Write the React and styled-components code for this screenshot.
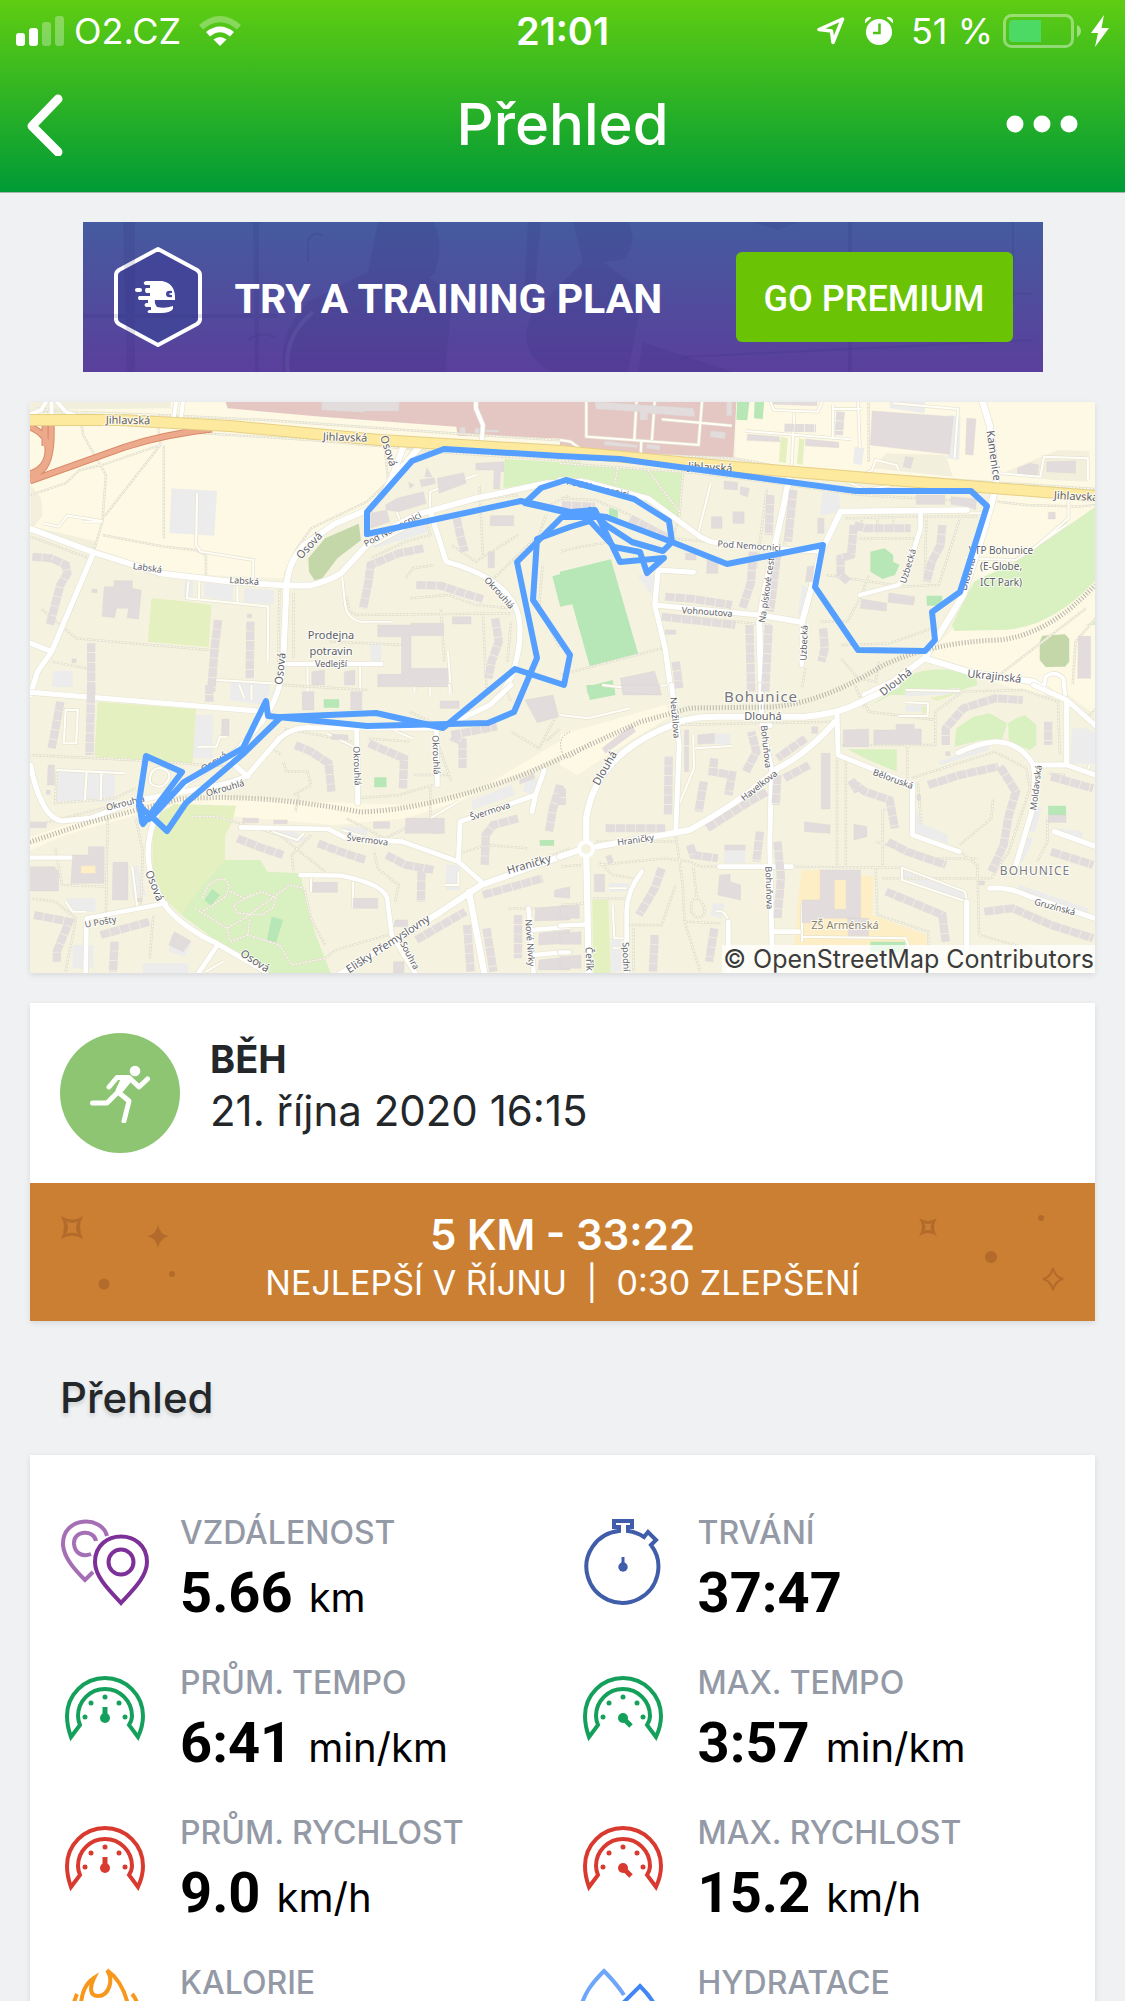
import React from 'react';
import styled, { createGlobalStyle } from 'styled-components';

const UI_FONT = 'Inter, "Liberation Sans", sans-serif';
const DISPLAY_FONT = 'Roboto, "Liberation Sans", sans-serif';

/* Map data. Each tile has its own grid, roughly three units to a pixel. */
const TILES = [
  {
    at: 'translate(-10 -7) scale(.3507 .3333)',
    areas: [
      ['#fdf9e5', 'M0 0H1600V150L1130 130 1040 300 960 350 830 420 780 480 750 550 540 540 400 530 210 470 0 395Z'],
      ['#f2f0dc', 'M30 20H430V40L30 45ZM30 270L60 310 65 360 40 395 220 440 210 465 30 400Z'],
      ['#e4c7c3', 'M580 0H1600V135L1520 130 1248 122 1244 95 860 65 592 40Z'],
      ['#ececec', 'M432 280L562 288 554 422 426 414ZM526 562L608 568 606 618 524 606ZM640 580L724 585 724 628 638 622ZM470 555L496 557 492 610 466 606ZM95 828H150V876H90ZM600 860H712V900H600ZM1000 420L1160 390 1165 410 1010 460ZM1000 740H1030V800H1000Z'],
      ['#e4f0bf', 'M375 610L460 618 546 630 538 756 364 740Z'],
      ['#d9f0c0', 'M1382 192L1600 205V262L1480 262 1378 280Z'],
      ['#c3d7a9', 'M966 386L972 436 905 490 862 550 840 556 824 530 822 490 870 430Z'],
      ['#b7e6b7', 'M1518 544L1600 520V620L1540 634Z'],
    ],
    paths: 'M30 50L400 60 700 75 1300 120 1600 140M170 50L180 120 245 240 235 380 210 470M45 40L140 50 390 60 400 150 235 210 170 225 130 265 30 300M400 150L240 365M410 150V430M235 420L410 455 500 465 530 480V540M450 110L830 135 1040 155 1240 175 1600 200M1040 155L1050 260 990 320 830 400 790 460 755 540M60 640L160 730 540 765M740 580L735 860M780 590V790M880 740L1100 750M30 425L200 490 150 640 90 770M90 800L190 820M1000 490L1100 440 1170 420 1160 380M1240 330L1340 310 1420 300M1310 270L1320 480M1230 450L1300 500 1420 420M1100 550L1120 520 1180 510M1110 610L1220 600 1300 630 1400 640M930 600L940 650 960 660 1400 655M1200 640L1210 800M1320 660L1330 880M1400 680L1390 800M1490 510L1480 640 1540 760M1350 550L1480 420 1500 360M1510 330L1568 300',
    lanes: 'M180 380L235 380M65 385L110 395 135 362 235 378M505 295L502 450 515 470 665 495V550M480 560L476 610 620 625 708 635 706 800M620 570V625M512 548L510 610M918 540L926 620Q930 670 970 680L1060 680M1168 350L1170 290 1300 240M1070 340L1085 380M1010 450L1100 400M820 810V890M970 810V900M1220 770L1230 900M560 855L735 866M1170 900V860',
    roads: [
      [17, 'M30 402L210 472 400 535 600 560 760 572 825 572Q880 558 915 535L990 450Q1100 365 1168 348L1300 310 1500 265 1600 258'],
      [17, 'M760 572L752 760Q752 850 725 910M760 572Q765 500 810 450L900 385 1000 340Q1050 290 1070 220L1095 150M1070 240L1140 155'],
      [15, 'M210 472L90 770 50 830 30 900M90 770L30 745'],
      [15, 'M1170 350L1215 500Q1420 560 1425 690 1430 760 1400 850L1370 900'],
      [14, 'M765 807H1030'],
      [11, 'M445 20L438 75M465 20L458 75M75 20L60 45 25 60M90 20V60M105 20L130 50 160 62M1300 20L1300 40 1320 90 1316 150'],
    ],
    rows: 'M35 485L90 490 130 510 135 535 115 570 100 630 85 690M203 745V900M565 675L555 760 545 890M657 680L655 850M1150 460L1080 475 1000 510 992 570 978 640M1130 570L1200 572 1250 590 1320 612M1245 370L1255 420 1268 470M1355 670L1365 740 1345 800 1335 850',
    buildings: 'M240 575H268V557H320V580L346 586 338 672 305 668 310 640H275L270 668 234 664ZM1300 205L1380 200V230H1370L1368 282H1350L1352 225H1300ZM1190 250L1265 233 1272 265 1195 295ZM1160 218L1175 245 1155 245ZM1075 310L1150 290 1158 325 1080 350 1045 345 1042 330ZM1000 355L1045 345 1055 380 1000 400ZM1108 262L1124 270 1112 280ZM1140 255L1180 248 1185 265 1145 275ZM1342 362H1408V392H1340ZM1335 470H1353V518H1335ZM1020 690H1115V685H1208V722H1115V820H1220V875H1020V838H1088V725H1020ZM1233 665H1286V687H1233ZM860 20H1082L1080 48H982V52L860 45ZM1255 97H1270V115H1253ZM1297 100H1310V115H1296ZM1328 104L1366 106V112L1328 110ZM832 830L868 825V870H832ZM925 830L955 825V870H925ZM648 658H660V668H648ZM205 583H220V593H205ZM148 792H160V803H148Z',
  },
  {
    at: 'translate(530 -7) scale(.3507 .3333)',
    areas: [
      ['#fdf9e5', 'M500 0H1568V900H1350L1040 790 1130 690 1210 420 1245 300 1060 260 650 230 500 190Z'],
      ['#e4c7c3', 'M0 0H504L494 190 230 185 0 150Z'],
      ['#f2f0dc', 'M890 220L930 175 1100 180 1120 245ZM1270 230L1420 165 1510 168 1505 260 1400 255Z'],
      ['#d9f0c0', 'M0 200L355 230 338 375 230 310 0 268ZM1540 325V540Q1400 710 1240 705L1125 708 1118 690 1180 560 1300 500Q1440 400 1540 325ZM1500 690L1568 650V690ZM930 900L1010 835Q1080 810 1185 840L1190 870 1100 900Z'],
      ['#ececec', 'M750 290L795 295 800 350 740 362ZM690 570L725 590 710 650 678 660ZM220 540L270 540 260 600ZM840 155L868 160 860 210 836 205ZM1110 60L1142 65 1138 195 1104 190ZM985 880H1140V900H985ZM940 20H1040V55L940 40Z'],
      ['#b7e6b7', 'M505 20H540L534 76 503 74ZM555 20H582L578 72 553 70ZM0 530L145 493 224 780 86 818 35 628 0 635ZM140 340H165V370H140ZM885 470L925 460 950 480V500L968 510 955 540 920 552 885 530ZM1045 602H1090V632H1046ZM75 875L150 855 158 900H80Z'],
      ['#e4f0bf', 'M630 125L650 130 644 205 624 200ZM682 130L697 134 692 210 676 205Z'],
      ['#c3d7a9', 'M1375 722L1440 718 1452 732V800L1440 815 1385 816 1368 795V740Z'],
    ],
    paths: 'M0 155L230 178 500 190 660 222 860 235 1240 262 1568 285M0 205L400 235 640 268 860 300 1180 320M1245 320L1330 330 1480 335 1568 325M350 235L340 370 320 430M250 225L340 350M165 220L155 270M0 310L100 315 200 360 320 430 420 440M590 280L560 520M660 280L640 450 590 600M810 370L1000 365 1190 365M860 370V400M905 370V400M950 370V400M860 430H1000M850 430L1010 430M1045 370L1040 540M1140 370L1080 570 980 575 760 540M740 680H820L860 600 880 540M800 750L940 745 1060 700M800 790L850 850 900 860 910 800M690 880L700 820M300 660L600 690M0 470L60 455 150 440M0 840L290 760M880 20L880 200M1460 900L1470 740 1568 620M1240 850L1500 640',
    lanes: 'M600 20L610 45 735 50 748 20M668 55L660 220M530 108L830 133M778 30V125M780 42H860M75 20V125L395 150 405 20M290 73L490 92M218 20L212 135M270 20L262 135M232 135L230 185M0 135L30 140 70 170M430 265L395 410M850 20L855 160M950 25L1135 42 1125 190M865 240L890 225 900 195 960 210 965 225M1255 235L1370 245 1380 185 1505 190V255M1450 310V370L1340 470M1155 490L1300 495 1450 385M820 260L870 285 950 270M1165 355H1210',
    roads: [
      [15, 'M0 255L80 262 250 310 400 425 430 440 580 460 740 468'],
      [17, 'M655 240L640 320 615 440 585 580 568 680 574 900M568 660L690 682 745 470 800 350 1160 345'],
      [13, 'M1028 350V400L985 545 965 570 855 600M690 682V810'],
      [15, 'M270 630L280 525 380 532M568 660L270 630 300 760 318 900'],
      [18, 'M1205 20L1225 90 1245 270 1205 420 1150 600 1040 790 950 860 870 900M1040 790L1180 835 1350 860 1400 895'],
      [11, 'M1380 870L1385 845Q1410 825 1435 850L1440 900'],
    ],
    rows: 'M600 300L595 420M665 285L650 440M550 470L545 560 520 640M620 470L605 600 598 650M822 560L800 540 800 490 830 480 838 390 870 400 1000 400M1090 390L1085 450 1060 500 1045 560M750 700L755 760 745 800M5 330L100 335M200 370L310 430M300 605L380 612 490 630M290 665L500 690M540 690L545 890M595 690L585 890M640 98L730 100M800 50L795 120M330 800L340 880',
    buildings: 'M100 20L380 40 385 65 250 55V75H228V50L102 42ZM430 108L472 112 470 132 428 125ZM475 20H490V62H475ZM128 138L222 150 220 158 126 150ZM248 147L285 152V165L247 160ZM890 48L1122 65 1110 178 885 150ZM1160 70L1186 72 1178 180 1156 178ZM535 118L625 125 628 140 533 136ZM700 132L795 142V158L700 152ZM985 185L1008 188 1000 220 978 215ZM1305 220L1340 205 1365 210 1362 240 1305 235ZM1388 200L1470 198V235L1388 230ZM432 365H462V400H432ZM493 350H525V385H493ZM468 258L506 262V285L468 282ZM515 275L540 280 535 305 513 298ZM420 490H450V535H418ZM358 475H388V495H358ZM735 370H753V415H735ZM1016 300H1097V328H1016ZM1115 305L1188 312 1185 345 1165 335 1115 328ZM860 612L932 625 930 648 856 640ZM938 594L1012 605 1008 630 935 622ZM1393 352H1412V372H1392ZM1478 724H1513V850H1476ZM172 850L270 828 290 900H180ZM705 515L725 512 720 560H700ZM608 20H733V32L608 28ZM300 705H330V718H300Z',
  },
  {
    at: 'translate(-10 283) scale(.3507 .3333)',
    areas: [
      ['#fdf9e5', 'M20 460L330 350 500 330 850 350 1100 360 1300 320 1568 150V200L1250 350 1100 400 900 420 620 395 400 370 130 450 20 500Z'],
      ['#ececec', 'M105 255H270V350H100ZM500 90H550V220H490ZM600 0L712 10 700 60 598 45ZM700 440L770 435 820 460 790 475ZM1290 345L1400 300 1412 330 1290 375ZM315 545L335 540 358 630 320 640ZM130 640H215V680H150ZM150 780H210V850H150ZM350 835H480V865H350ZM1215 540H1255V615H1215ZM1440 290L1480 280 1470 330 1435 320ZM430 750L490 770 470 815 425 800ZM915 425L990 430V450L930 450Z'],
      ['#e4f0bf', 'M222 50L502 72 492 236 212 214ZM378 400L440 357 616 362 605 410 585 450V525L540 575 460 690 410 640 378 560Z'],
      ['#d9f0c0', 'M585 525H685L705 560 800 565 810 620 840 740 888 870H720L620 800 550 760 460 690 520 600Z'],
      ['#b7e6b7', 'M548 612L570 630 545 662 526 645ZM718 695L750 705 730 774 704 765ZM866 43H910V68H866ZM1010 277H1045V307H1010ZM1482 465H1523V482H1482Z'],
    ],
    paths: 'M30 210L320 225 600 245M105 255L100 355 270 340 330 310M30 425L330 345M250 400L245 690M330 400L350 500 345 660M100 490L120 600 240 605M490 395L560 395 740 450 870 560M780 560L775 510 830 450M520 640Q540 580 580 582 610 600 580 640L520 680M600 620L640 640 690 620 730 640 720 670 690 690 620 685 610 660 660 630M500 670L590 730 640 700 770 600 810 610M590 730L600 770 650 750 740 780 775 840 870 820 900 795 1050 750M650 750L655 700M810 610L830 700 870 780M750 160L720 190 745 210M750 230L760 260 820 260 830 300 780 330M785 380L795 330M750 130L950 170M1110 80L1170 110 1230 290M1170 300V400M960 340L1080 330 1180 300M1010 500L1020 550 1080 600 1070 650M930 400L1040 460 1100 430 1200 445M1120 270H1220M1400 50L1380 0M1330 590L1568 490M1390 670H1568M30 640L100 650 160 700 130 860M380 690L370 820M750 0L990 15M1400 140L1480 190 1530 90M990 160L1110 170M1540 130L1500 170M1240 510L1330 480 1450 490',
    lanes: 'M130 75H165L160 175H125ZM105 255L300 265M190 260L185 345M232 260L230 345M370 290Q370 250 400 248 430 255 425 280 415 305 395 305 372 300 370 290M505 185H560L570 155 590 155M625 0L640 40M660 0V45M320 545L335 670M1125 20V0H1225V30M1170 400L1250 350M130 650L150 680H190M720 440L790 465 810 445M875 145L950 185M830 580V620M950 590V670M1050 130L1120 160M1210 600L1250 600V560M920 435L980 455M530 860L580 830',
    roads: [
      [15, 'M30 22L700 80M740 0Q730 50 690 110L620 195 480 290 395 375Q365 440 365 510 370 600 420 670 470 730 560 775L700 860'],
      [15, 'M30 240Q60 400 120 408L200 400 340 345 520 310Q620 290 650 270L740 160Q780 125 830 128L1200 130 1340 60 1400 0M600 230L650 275'],
      [14, 'M960 135L963 355M1187 130L1190 300M630 427L880 432 930 460 1090 470 1250 530 1315 590M1250 530L1255 410 1470 330 1495 255M1470 330L1460 380'],
      [18, 'M910 870L1200 680 1315 600 1568 505M1280 620L1325 870'],
      [13, 'M800 570L915 572Q1050 600 1048 650L1060 750 1130 870M30 518H145M415 655L190 700 187 870M560 785L505 870M1450 670L1465 870M1460 735L1568 725M1465 810L1568 800'],
    ],
    rows: 'M115 50L105 110 90 190M203 0L198 210M540 0V50M785 180L830 200 880 235 888 320M995 175L1050 200 1095 220 1092 310M1230 155L1262 170 1262 250M1230 150L1360 125M620 460L680 485 750 510M850 475L900 495 985 525M1045 510L1100 540 1180 555M1145 560L1143 650M1420 400L1350 420 1328 450 1325 540M1540 300L1520 370 1508 440M1320 630L1490 580M1130 765L1270 680M230 750L370 710M270 770L265 860M40 690L140 710 105 800V830M1275 720L1285 860M1330 730L1350 860M1420 690V820',
    buildings: 'M150 510H195V485H240V595H145ZM1440 45L1520 30 1536 95 1475 113ZM30 545H98L110 560V618H30ZM265 532H308V645H263ZM80 240H98V300H78ZM30 410L75 412V428H30ZM576 102H596V152H574ZM805 20H838V75H805ZM943 20H975V75H943ZM1198 48H1252V70H1198ZM890 148L935 150V165L888 163ZM635 400H680V413H635ZM724 405H762V416H724ZM1008 410H1054V430H1008ZM1100 400H1210V445H1098ZM1425 285L1465 265 1468 280 1425 297ZM836 592H905V622H834ZM950 640H1020V670H950ZM440 740L487 768 465 800 425 780ZM1470 670L1568 660V705L1468 708ZM1480 745L1568 735V775L1478 780ZM1480 825L1568 815V855H1478ZM1070 705H1105V725H1065ZM1065 830H1095V865H1065ZM1525 615L1568 605V640L1523 635ZM75 316H86V328H75ZM335 640H348V650H335Z',
    holes: 'M175 542H215V565H173Z',
  },
  {
    at: 'translate(530 283) scale(.3507 .3333)',
    areas: [
      ['#fdf9e5', 'M1430 0H1568V120L1450 30ZM0 150L300 60 320 90 150 200 50 270 0 240Z'],
      ['#fdeec5', 'M690 555H742V645H858V570L895 575 890 690 1045 750V780H670L680 630Z'],
      ['#ececec', 'M440 145L487 147 484 180 440 177ZM985 15H1140V25L985 35ZM985 60H1050V80H985ZM1015 370L1030 415 1105 450 1106 475 1010 445ZM975 555L1165 625 1160 650 975 575ZM1460 130H1500L1568 170V240L1455 235ZM1080 230L1220 180 1225 195 1085 240ZM1350 370L1375 365 1355 440 1338 440ZM470 480H528V535H468ZM1310 600L1505 670V685L1300 615ZM435 655L468 655 460 700 430 690ZM140 595H195V620H140ZM145 760H175V860H145ZM1415 430L1490 440V460L1410 445ZM1320 455L1350 460 1320 530 1303 530Z'],
      ['#d9f0c0', 'M880 65L950 25 1080 15 1190 0H1000L960 10ZM1130 130L1180 95 1225 85 1275 115 1260 165 1200 165 1125 185ZM1278 115L1300 100 1325 90 1358 120V180L1340 195 1280 170ZM820 193H960V260L880 225Z'],
      ['#e4f0bf', 'M92 645H138L145 870H95ZM1030 65H1045V85H1033ZM1055 38L1140 22 1075 48Z'],
      ['#b7e6b7', 'M75 0L155 0 158 30 85 45ZM1392 362H1443V390H1392ZM885 770H985V800H885Z'],
    ],
    paths: 'M320 120L800 110M800 180H1070V80L1150 20 1320 15 1420 50 1425 210M1000 280L1240 200 1330 250 1340 310 1280 500 1230 580H920M790 110V540M815 220V540M920 370V540M660 545L970 548M1130 490L1190 540 1195 750M900 545L905 690 1050 740V780M990 180V280M1235 340L1230 400 1140 480M1020 290L1030 415M1390 265L1440 270M1390 400V470L1360 530M110 530L150 570 210 580M330 450L350 600 355 710 400 860M100 470H330M380 545L390 640Q420 660 410 690 390 710 375 680 370 640 390 640M355 710L460 715M190 720H290L330 600M110 540L300 520 370 530 400 545 460 545M210 860V730M90 640H190M0 545L60 540M0 660L70 655M930 370L920 380M1190 520H1060L900 470M1500 100L1568 30M865 40L880 80 1070 105M840 0L870 70M1195 750L1568 860',
    lanes: 'M380 150L382 250 335 370M385 190L490 183M985 15L1140 18M985 52L1050 55 1048 90M965 93H1050M975 548L1155 620 1160 650 975 585ZM690 770V660M690 755L985 760 995 785M150 660L155 760H185M140 610H190M445 680Q470 670 480 710M0 90L80 100 200 70M120 0L200 10 310 0M1510 240L1500 270M150 790H185',
    roads: [
      [18, 'M320 120Q360 95 450 95L700 95Q790 85 840 60L900 30 960 0M320 120Q100 210 75 400V470M105 485L370 435Q520 350 620 250 700 210 785 110'],
      [18, 'M0 515L55 495M75 515L82 870'],
      [14, 'M318 0L340 180 330 440M572 0L575 90M580 122H600M575 120L603 250 598 480 605 800M455 545H660M605 740H680M790 85L793 210 1005 300V450L1138 500'],
      [15, 'M1350 0L1445 45 1568 160M1445 45V240L1350 240Q1310 170 1240 170 1190 175 1135 203M1350 240Q1360 310 1345 380L1300 540M1445 240L1568 285M1410 440L1568 500M1225 610Q1280 605 1340 635L1568 715M1160 650V790'],
      [13, 'M233 560Q190 620 190 680V870M480 710V870M0 722L80 718M0 802H25'],
    ],
    rows: 'M310 215L308 390M620 270L615 360M700 160L620 220M710 240L640 280M420 430L540 350 590 320M130 430H300M530 260L560 200 545 140M440 220L435 260 490 270 480 330M410 290L395 380M830 290L870 320 940 345 955 430M830 285L850 320M935 470L990 500 1100 540M1100 180L1100 130 1150 70 1240 40 1320 45M1392 110V180M1050 300L1140 270 1250 245M1255 245L1300 320 1280 390 1265 480 1230 560M1400 275L1520 310M1400 500L1520 540M930 620L1000 650 1090 690 1100 770M1210 680L1290 670 1400 720 1520 760M570 440L560 530M620 470L630 580 620 700M370 480L380 510 450 520M290 550L270 610 225 690M270 750L265 860M440 730L425 830M5 310V360',
    buildings: 'M393 150L440 145V175L393 178ZM355 135H367V180H355ZM355 185H367V260H355ZM745 205H770V372H745ZM808 135L880 132V185H808ZM895 135H958V118H1010V132H1030V178H895ZM697 410L770 420V445L697 440ZM838 418L875 425V455L838 465ZM742 555H857V700H742V713H690V645H742ZM820 700H880V752H822ZM98 568H127V620H98ZM455 570L485 568V590L515 600V645L450 630ZM130 515L145 510 152 528 140 538ZM0 665L55 660V700H0ZM0 745L60 740V778H0ZM0 815L60 810V850H0ZM120 190L205 120 215 140 130 205ZM718 125H735V145H718ZM176 0L285 0 280 30 178 22ZM1392 390H1443V412H1392ZM470 480H528V495H470ZM1100 200H1112V212H1100ZM1018 330H1028V345H1018ZM1195 588H1210V600H1195Z',
    holes: 'M783 585H815V672H783Z',
  },
];

const RAILS =
  'M0 440L60 420 150 397Q230 391 330 410 400 408 500 370L610 320 660 306 740 305Q790 302 850 265 900 240 970 238 1020 232 1065 183';

const TRUNK = 'M0 25Q18 32 18 48 18 66 0 72M15 21V44M21 21Q23 62 9 70L0 78M0 79L95 45Q135 32 182 27';
const MAIN_ROAD = 'M0 18H90L200 24 350 38 530 49 680 63 850 77 1065 94';

// street labels: text, x, y, size, angle
const LABELS = [
  ['Jihlavská', 98, 22, 11, 1], ['Jihlavská', 315, 39, 11, 2], ['Jihlavská', 680, 69, 11, 3],
  ['Jihlavská', 1046, 98, 11, 3], ['Osová', 355, 50, 11, 72], ['Osová', 282, 146, 11, -47],
  ['Pod Nemocnici', 364, 130, 9, -28], ['Labská', 117, 169, 9, 8], ['Labská', 214, 182, 9, 4],
  ['Okrouhlá', 467, 193, 9, 48], ['Prodejna', 301, 237, 11, 0], ['potravin', 301, 253, 11, 0],
  ['Vedlejší', 301, 265, 9, 0], ['Osová', 254, 267, 11, -84], ['Kamenice', 960, 54, 11, 82],
  ['Pod Nemocnici', 567, 89, 9, 12], ['Pod Nemocnici', 719, 147, 9, 4],
  ['Na pískové cestě', 740, 186, 9, -82], ['Uzbecká', 881, 165, 9, -73],
  ['VTP Bohunice', 971, 152, 10, 0], ['(E-Globe,', 971, 168, 10, 0], ['ICT Park)', 971, 184, 10, 0],
  ['Dlouhá', 941, 173, 10, -74], ['Vohnoutova', 677, 213, 9, 4], ['Uzbecká', 777, 241, 9, -88],
  ['Ukrajinská', 964, 278, 11, 6], ['Dlouhá', 868, 283, 11, -38], ['Dlouhá', 733, 318, 11, 0],
  ['Neužilova', 642, 316, 9, 85], ['Bohuňova', 733, 345, 9, 84], ['Havelkova', 731, 386, 9, -38],
  ['Dlouhá', 578, 368, 11, -60], ['Hraničky', 606, 441, 9, -8], ['Běloruská', 862, 380, 9, 20],
  ['Moldavská', 1009, 386, 9, -83], ['Bohuňova', 736, 486, 9, 88], ['Gruzínská', 1024, 508, 9, 15],
  ['Čeřík', 556, 557, 10, 88], ['Spodní', 593, 555, 9, 88], ['Osová', 186, 363, 10, -33],
  ['Okrouhlá', 196, 389, 9, -16], ['Okrouhlá', 96, 404, 9, -14], ['Okrouhlá', 324, 364, 9, 88],
  ['Okrouhlá', 403, 353, 9, 88], ['Švermova', 337, 441, 9, 7], ['Švermova', 461, 412, 9, -18],
  ['Hraničky', 500, 466, 11, -16], ['Osová', 121, 485, 11, 68], ['U Pošty', 71, 523, 9, -10],
  ['Osová', 223, 562, 11, 33], ['Elišky Přemyslovny', 360, 545, 11, -33],
  ['Souhra', 377, 555, 9, 62], ['Nové Nivky', 497, 541, 9, 86],
];

const ROUTE = [
  '337,132 337,110 382,59 414,47 530,54 590,57 826,89 941,89 957,104 930,190 902,210 905,238 895,249 828,248 785,185 793,143 697,162 642,140 576,115 530,109 495,101 511,86 536,78 604,97 639,119 642,140 633,149 602,140 576,123 560,108',
  '337,132 491,99 540,110 565,108 590,160 634,156 617,171 610,150 584,145 560,119 540,125 507,137 503,198 540,253 534,283 485,267 413,326 346,311 251,315 213,352 156,401 137,429 120,413 109,404',
  '576,115 532,115 487,160 507,256 484,310 458,321 337,324 238,314 236,299 213,346 154,380 121,416 112,420 109,400 116,354 152,370 113,422 111,404',
];

const CityMap = () => (
  <MapSvg viewBox="0 0 1065 571" role="img" aria-label="Mapa trasy">
    <rect width="1065" height="571" fill="#f5f3df" />
    {TILES.map(t => (
      <g key={t.at} transform={t.at}>
        {t.areas.map(([fill, d]) => <path key={d} d={d} fill={fill} />)}
        <path d={t.paths} fill="none" stroke="#e4e1ce" strokeWidth="7" />
        <path d={t.paths} fill="none" stroke="#fcfbf2" strokeWidth="3" strokeDasharray="6 4" />
        <path d={t.lanes} fill="none" stroke="#e6e3d0" strokeWidth="10" />
        <path d={t.lanes} fill="none" stroke="#fffef8" strokeWidth="6" />
      </g>
    ))}
    <path d={TRUNK} fill="none" stroke="#d98a68" strokeWidth="7" />
    <path d={TRUNK} fill="none" stroke="#eda98b" strokeWidth="5" />
    {TILES.map(t => (
      <g key={t.at} transform={t.at} fill="none" strokeLinecap="round" strokeLinejoin="round">
        {t.roads.map(([w, d]) => <path key={d} d={d} stroke="#e8e5d3" strokeWidth={w + 4} />)}
        {t.roads.map(([w, d]) => <path key={d} d={d} stroke="#fff" strokeWidth={w} />)}
      </g>
    ))}
    <path d={MAIN_ROAD} fill="none" stroke="#e6d084" strokeWidth="12" />
    <path d={MAIN_ROAD} fill="none" stroke="#fdea9f" strokeWidth="10" />
    {TILES.map(t => (
      <g key={t.at} transform={t.at}>
        <path d={t.rows} fill="none" stroke="#e2dddc" strokeWidth="24" strokeDasharray="27 2" />
        <path d={t.buildings} fill="#e2dddc" stroke="#d8d2cf" strokeWidth="1" />
        {t.holes && <path d={t.holes} fill="#fdeec5" />}
      </g>
    ))}
    <path d={RAILS} fill="none" stroke="#b5b3a9" strokeWidth="5" strokeDasharray="1 2" />
    <path d="M560 340Q535 365 532 350 527 335 540 330" fill="none" stroke="#9b9a93" strokeDasharray="1 2" />
    <circle cx="556" cy="447" r="7" fill="#f5f3df" stroke="#fff" strokeWidth="4" />
    <g fontFamily='"Noto Sans", sans-serif' fill="#5f5f66" stroke="#fff" strokeWidth="2" strokeOpacity=".8" paintOrder="stroke" textAnchor="middle">
      {LABELS.map(([text, x, y, size, angle]) => (
        <text key={`${text}${x}`} x={x} y={y} fontSize={size} transform={`rotate(${angle} ${x} ${y})`}>{text}</text>
      ))}
      <text x="731" y="300" fontSize="15" fill="#77777c" letterSpacing="1">Bohunice</text>
      <text x="1005" y="473" fontSize="12" fill="#7d7d82" letterSpacing="1">BOHUNICE</text>
      <text x="815" y="527" fontSize="11" fill="#8f8468">ZŠ Arménská</text>
    </g>
    <g fill="none" stroke="#549fff" strokeWidth="6" strokeLinejoin="round" strokeLinecap="round">
      {ROUTE.map(points => <polyline key={points} points={points} />)}
    </g>
  </MapSvg>
);

const SignalIcon = () => (
  <svg width="48" height="30" viewBox="0 0 48 30" fill="#fff">
    <rect y="17" width="9" height="13" rx="3" />
    <rect x="13" y="12" width="9" height="18" rx="3" />
    <rect x="26" y="6" width="9" height="24" rx="3" opacity=".3" />
    <rect x="39" width="9" height="30" rx="3" opacity=".3" />
  </svg>
);

const WifiIcon = () => (
  <svg width="42" height="30" viewBox="0 0 42 30" fill="#fff">
    <path d="M0 9Q21-9 42 9L38 13.500Q21-1 4 13.500Z" opacity=".3" />
    <path d="M7 16Q21 5 35 16L31 20.500Q21 12 11 20.500Z" />
    <path d="M14.500 23.500Q21 18.500 27.500 23.500L21 30Z" />
  </svg>
);

const LocationIcon = () => (
  <svg width="28" height="28" viewBox="0 0 28 28" fill="none" stroke="#fff" strokeWidth="3.500" strokeLinejoin="round">
    <path d="M2 12.500L25.500 2 16 25.500 14.500 14Z" />
  </svg>
);

const AlarmIcon = () => (
  <svg width="28" height="28" viewBox="0 0 28 28">
    <circle cx="14" cy="15" r="13" fill="#fff" />
    <path d="M0 6Q0 0 6 .5L0 6ZM28 6Q28 0 22 .5Z" fill="#fff" stroke="#fff" />
    <path d="M14.500 6.500V16H8" fill="none" stroke="#4dc117" strokeWidth="2.500" />
  </svg>
);

const BatteryIcon = () => (
  <svg width="78" height="34" viewBox="0 0 78 34">
    <rect x="1.500" y="1.500" width="68" height="31" rx="7" fill="none" stroke="#fff" strokeOpacity=".4" strokeWidth="3" />
    <path d="M74 11Q78 13 78 17T74 23Z" fill="#fff" opacity=".45" />
    <path d="M38 6V28H10Q6 28 6 24V10Q6 6 10 6Z" fill="#4cd964" />
  </svg>
);

const BoltIcon = () => (
  <svg width="18" height="32" viewBox="0 0 18 32" fill="#fff">
    <path d="M13 0L0 18H7L4 32 18 13H10.500Z" />
  </svg>
);

const BackIcon = () => (
  <svg width="40" height="64" viewBox="0 0 40 64" fill="none" stroke="#fff" strokeWidth="9" strokeLinecap="round" strokeLinejoin="round">
    <path d="M33 7L7 34 33 60" />
  </svg>
);

const MoreIcon = () => (
  <svg width="72" height="18" viewBox="0 0 72 18" fill="#fff">
    <circle cx="9" cy="9" r="8.500" />
    <circle cx="36" cy="9" r="8.500" />
    <circle cx="63" cy="9" r="8.500" />
  </svg>
);

const PlanIcon = () => (
  <svg width="90" height="102" viewBox="0 0 90 102">
    <path d="M45 3L84 24Q87 26 87 29V73Q87 76 84 78L45 99 6 78Q3 76 3 73V29Q3 26 6 24Z" fill="#434599" stroke="#fff" strokeWidth="4" strokeLinejoin="round" />
    <path d="M33 35H49Q61 37 62 50V54H42Q41 57 44 61 52 63 60 60V63Q57 67 48 67H36Q33 66 36 64H38V61H33Q30 59 33 57H35V54H26Q24 52 26 50H37V47H33Q31 44 33 42H37V39H32Q29 36 33 35Z" fill="#fff" />
    <path d="M24 44H27" stroke="#fff" strokeWidth="4" strokeLinecap="round" />
    <path d="M59 45Q53 44 53 48T59 51V49Q56 49 56 48T59 47Z" fill="#434599" />
  </svg>
);

// two runners behind the banner text
const BannerArt = () => (
  <ArtSvg viewBox="0 0 960 150" preserveAspectRatio="none" aria-hidden="true">
    <g fill="#2e2a72" opacity=".13">
      <path d="M40 0H52V150H44ZM170 0H176V150H172ZM445 0H458L450 90H440Z" />
      <path d="M295 0H350Q362 20 352 50L346 56 370 70 362 150H200Q195 110 225 80L285 50Z" />
      <path d="M490 0H545Q556 20 540 38L520 40 560 70 545 150H470Q430 130 450 90L500 40Z" />
      <path d="M0 92H195V96H0ZM765 0H769V150H765ZM670 0H715L695 8ZM560 120L650 150H555Z" />
    </g>
    <g fill="none" stroke="#2e2a72" strokeWidth="2" opacity=".13">
      <path d="M165 118Q180 108 192 116M225 40V18Q232 8 240 14M700 70L950 72M600 135L950 118M930 0V80" />
      <path d="M205 150Q200 115 230 90" stroke="#9295d9" strokeWidth="4" />
    </g>
  </ArtSvg>
);

const RunnerIcon = () => (
  <svg width="60" height="60" viewBox="0 0 60 60" fill="none" stroke="#fff" strokeWidth="5" strokeLinecap="round" strokeLinejoin="round">
    <circle cx="45" cy="8" r="5.300" fill="#fff" stroke="none" />
    <path d="M2.500 40H17L28 29 39 38 34 58M19 24L27 14.500H39L49 24 57.500 16" />
    <path d="M34 17L38 17 29 28Z" strokeWidth="7" fill="#fff" />
  </svg>
);

const BadgeStars = ({ right }) => (
  <svg width="120" height="80" viewBox="0 0 120 80" fill="#b26b2a" aria-hidden="true">
    {right ? (
      <>
        <path d="M2 8Q11 14 20 8 14 17 20 26 11 20 2 26 8 17 2 8ZM7 13Q10 17 7 21 11 19 15 21 12 17 15 13 11 15 7 13Z" fillRule="evenodd" />
        <circle cx="74" cy="47" r="6" />
      </>
    ) : (
      <>
        <path d="M1 6Q13 13 23 6 17 17 23 29 12 22 1 29 7 17 1 6ZM6 11Q10 17 6 24 12 21 18 24 14 17 18 11 12 15 6 11Z" fillRule="evenodd" />
        <path d="M98 15Q100 25 109 26 100 28 98 38 96 28 87 26 96 25 98 15Z" />
        <circle cx="44" cy="74" r="5.500" />
        <circle cx="112" cy="64" r="3" />
      </>
    )}
  </svg>
);

const SmallStar = () => (
  <svg width="28" height="84" viewBox="0 0 28 84" fill="none" stroke="#b26b2a" strokeWidth="2" aria-hidden="true">
    <circle cx="4" cy="8" r="3" fill="#b26b2a" stroke="none" />
    <path d="M16 58Q18 67 26 69 18 71 16 80 14 71 6 69 14 67 16 58Z" />
  </svg>
);

const PinsIcon = () => (
  <StatSvg viewBox="0 0 90 90" strokeWidth="4">
    <path d="M47 20C42-1 2 0 3 29 4 42 15 54 25 64L33 56" stroke="#a56fb5" />
    <path d="M36 25C34 13 13 14 14 28 15 38 23 41 31 38" stroke="#a56fb5" />
    <path d="M61 87C50 75 35 61 35 46 35 12 87 12 87 46 87 61 72 75 61 87Z" stroke="#7c3098" />
    <circle cx="61" cy="46" r="12.500" stroke="#7c3098" />
  </StatSvg>
);

const StopwatchIcon = () => (
  <StatSvg viewBox="0 0 90 90" stroke="#3f5da8" strokeWidth="4">
    <path d="M50 15A36 36 0 0 1 66 21L70 16 78 24 73 29A36 36 0 1 1 41 15V11H36V5H54V11H50Z" />
    <path d="M45 41V51" strokeWidth="3" />
    <circle cx="45" cy="51" r="4.700" fill="#3f5da8" stroke="none" />
  </StatSvg>
);

const GaugeIcon = ({ color, max }) => (
  <StatSvg viewBox="0 0 90 90" stroke={color} strokeWidth="4">
    <path d="M11 71Q7 60 7 50A38 38 0 0 1 83 50Q83 60 78 71L69 59Q72 54 72 50A27 27 0 0 0 18 50Q18 54 20 59Z" />
    <g fill={color} stroke="none">
      <circle cx="25" cy="51" r="2.500" />
      <circle cx="31" cy="37" r="2.500" />
      <circle cx="45" cy="31" r="2.500" />
      <circle cx="59" cy="37" r="2.500" />
      <circle cx="65" cy="51" r="2.500" />
      <circle cx="45" cy="52" r="5" />
    </g>
    <path d={max ? 'M45 52L53 60' : 'M45 52V41'} strokeWidth="5" />
  </StatSvg>
);

const FlameIcon = () => (
  <StatSvg viewBox="0 0 90 90" stroke="#f7981d" strokeWidth="4">
    <path d="M47 4C54 14 49 30 38 30 29 30 30 20 34 12 22 20 22 32 20 42M47 4C58 12 66 26 69 44M17 28C15 32 14 36 12 44M72 28C76 32 78 38 80 44" />
  </StatSvg>
);

const WaterIcon = () => (
  <StatSvg viewBox="0 0 90 90" stroke="#4285f4" strokeWidth="4">
    <path d="M46 29C40 20 33 12 26 5 15 16 5 28 2 45" stroke="#6fa5fb" />
    <path d="M43 39L62 20C72 30 80 42 84 54" />
  </StatSvg>
);

const STATS = [
  { label: 'VZDÁLENOST', value: '5.66', unit: 'km', icon: <PinsIcon /> },
  { label: 'TRVÁNÍ', value: '37:47', icon: <StopwatchIcon /> },
  { label: 'PRŮM. TEMPO', value: '6:41', unit: 'min/km', icon: <GaugeIcon color="#14a05a" /> },
  { label: 'MAX. TEMPO', value: '3:57', unit: 'min/km', icon: <GaugeIcon color="#14a05a" max /> },
  { label: 'PRŮM. RYCHLOST', value: '9.0', unit: 'km/h', icon: <GaugeIcon color="#d93a30" /> },
  { label: 'MAX. RYCHLOST', value: '15.2', unit: 'km/h', icon: <GaugeIcon color="#d93a30" max /> },
  { label: 'KALORIE', icon: <FlameIcon /> },
  { label: 'HYDRATACE', icon: <WaterIcon /> },
];

const Stat = ({ label, value, unit, icon }) => (
  <StatItem>
    {icon}
    <StatText>
      <StatLabel>{label}</StatLabel>
      {value &&
        <StatValue>
          {value}
          {unit && <Unit>{unit}</Unit>}
        </StatValue>
      }
    </StatText>
  </StatItem>
);

const App = () => (
  <Screen>
    <GlobalStyle />
    <Header>
      <StatusBar>
        <StatusGroup>
          <SignalIcon />
          <span>O2.CZ</span>
          <Wifi><WifiIcon /></Wifi>
        </StatusGroup>
        <Clock>21:01</Clock>
        <StatusGroup $end>
          <LocationIcon />
          <Alarm><AlarmIcon /></Alarm>
          <span>51 %</span>
          <BatteryIcon />
          <BoltIcon />
        </StatusGroup>
      </StatusBar>
      <NavBar>
        <IconButton type="button" aria-label="Zpět"><BackIcon /></IconButton>
        <Title>Přehled</Title>
        <IconButton type="button" aria-label="Více" $end><MoreIcon /></IconButton>
      </NavBar>
    </Header>
    <Content>
      <Banner>
        <BannerArt />
        <PlanIcon />
        <BannerText>TRY A TRAINING PLAN</BannerText>
        <PremiumButton type="button">GO PREMIUM</PremiumButton>
      </Banner>
      <MapCard>
        <CityMap />
        <Attribution>© OpenStreetMap Contributors</Attribution>
      </MapCard>
      <Card>
        <Activity>
          <Avatar><RunnerIcon /></Avatar>
          <div>
            <ActivityName>BĚH</ActivityName>
            <ActivityDate>21. října 2020 16:15</ActivityDate>
          </div>
        </Activity>
        <Record>
          <BadgeStars />
          <div>
            <RecordTitle>5 KM - 33:22</RecordTitle>
            <RecordText>NEJLEPŠÍ V ŘÍJNU &nbsp;|&nbsp; 0:30 ZLEPŠENÍ</RecordText>
          </div>
          <RightStars>
            <BadgeStars right />
            <SmallStar />
          </RightStars>
        </Record>
      </Card>
      <SectionTitle>Přehled</SectionTitle>
      <StatsCard>
        {STATS.map(stat => <Stat key={stat.label} {...stat} />)}
      </StatsCard>
    </Content>
  </Screen>
);

export default App;

const GlobalStyle = createGlobalStyle`
  * {
    box-sizing: border-box;
  }
  body {
    margin: 0;
    background: #f0f1f3;
    font-family: ${UI_FONT};
    color: #23272a;
  }
  svg {
    display: block;
    flex-shrink: 0;
  }
  h1, h2, p {
    margin: 0;
  }
`;
const Screen = styled.div`
  display: flex;
  flex-direction: column;
  height: 100vh;
  overflow: hidden;
`;
const Header = styled.header`
  flex-shrink: 0;
  background: linear-gradient(#5fcd12, #009b36);
  border-bottom: 1px solid #a9b5ac;
  color: #fff;
`;
const StatusBar = styled.div`
  display: grid;
  grid-template-columns: 1fr auto 1fr;
  align-items: center;
  height: 62px;
  padding: 0 16px;
  font-size: 36px;
`;
const StatusGroup = styled.div`
  display: flex;
  align-items: center;
  justify-content: ${p => (p.$end ? 'flex-end' : 'flex-start')};
  gap: 10px;
`;
const Wifi = styled.span`
  margin-left: 8px;
`;
const Alarm = styled.span`
  margin: 0 8px 0 10px;
`;
const Clock = styled.div`
  font-size: 38px;
  font-weight: 600;
`;
const NavBar = styled.div`
  display: grid;
  grid-template-columns: 1fr auto 1fr;
  align-items: center;
  height: 130px;
  padding: 0 25px 6px;
`;
const IconButton = styled.button`
  justify-self: ${p => (p.$end ? 'end' : 'start')};
  padding: ${p => (p.$end ? '0 22px' : '0')};
  border: none;
  background: none;
  cursor: pointer;
`;
const Title = styled.h1`
  font-size: 58px;
  font-weight: 500;
  line-height: 68px;
`;
const Content = styled.main`
  display: flex;
  flex-direction: column;
  flex: 1;
  min-height: 0;
  padding: 29px 30px 0;
`;
const Banner = styled.section`
  position: relative;
  display: flex;
  align-items: center;
  flex-shrink: 0;
  align-self: center;
  gap: 32px;
  width: 960px;
  max-width: 100%;
  height: 150px;
  padding: 0 30px;
  background: linear-gradient(#455b9f, #5a3f9c);
`;
const ArtSvg = styled.svg`
  position: absolute;
  inset: 0;
  width: 100%;
  height: 100%;
`;
const BannerText = styled.p`
  position: relative;
  flex: 1;
  padding-top: 4px;
  color: #fff;
  font: 700 41px/48px ${DISPLAY_FONT};
`;
const PremiumButton = styled.button`
  position: relative;
  height: 90px;
  padding: 4px 28px 0;
  border: none;
  border-radius: 6px;
  background: #6ac304;
  color: #fff;
  font: 500 36px/44px ${DISPLAY_FONT};
  cursor: pointer;
`;
const Card = styled.section`
  flex-shrink: 0;
  background: #fff;
  box-shadow: 0 2px 6px rgba(0, 0, 0, .1);
`;
const MapCard = styled(Card)`
  position: relative;
  margin: 30px 0;
`;
const MapSvg = styled.svg`
  width: 100%;
  height: auto;
`;
const Attribution = styled.div`
  position: absolute;
  right: 0;
  bottom: 0;
  padding: 0 1px;
  background: rgba(255, 255, 255, .75);
  color: #3c3c3c;
  font-size: 25px;
  line-height: 28px;
`;
const Activity = styled.div`
  display: flex;
  gap: 30px;
  padding: 30px;
`;
const Avatar = styled.div`
  display: flex;
  align-items: center;
  justify-content: center;
  width: 120px;
  height: 120px;
  border-radius: 50%;
  background: #8dc573;
`;
const ActivityName = styled.h2`
  font-size: 38px;
  font-weight: 700;
  line-height: 52px;
`;
const ActivityDate = styled.p`
  font-size: 42px;
  line-height: 52px;
`;
const Record = styled.div`
  display: grid;
  grid-template-columns: 1fr auto 1fr;
  height: 138px;
  padding: 27px 30px;
  background: #cb7f32;
  color: #fff;
  text-align: center;
`;
const RightStars = styled.div`
  display: flex;
  justify-content: flex-end;
`;
const RecordTitle = styled.h2`
  font-size: 42px;
  font-weight: 600;
  line-height: 50px;
`;
const RecordText = styled.p`
  font-size: 34px;
  line-height: 46px;
`;
const SectionTitle = styled.h2`
  padding: 52px 30px 32px;
  font-size: 42px;
  font-weight: 500;
  line-height: 50px;
  text-shadow: 0 3px 4px rgba(0, 0, 0, .15);
`;
const StatsCard = styled(Card)`
  display: grid;
  grid-template-columns: 1fr 1fr;
  grid-auto-rows: 120px;
  gap: 30px;
  padding: 61px 30px;
`;
const StatItem = styled.div`
  display: flex;
  gap: 30px;
`;
const StatSvg = styled.svg`
  width: 90px;
  height: 90px;
  fill: none;
`;
const StatText = styled.div`
  min-width: 0;
`;
const StatLabel = styled.div`
  color: #9499a6;
  font-size: 32px;
  font-weight: 500;
  line-height: 34px;
`;
const StatValue = styled.div`
  color: #000;
  font: 700 56px/68px ${DISPLAY_FONT};
  margin-top: 9px;
`;
const Unit = styled.span`
  margin-left: 16px;
  font: 400 40px/48px ${UI_FONT};
`;
